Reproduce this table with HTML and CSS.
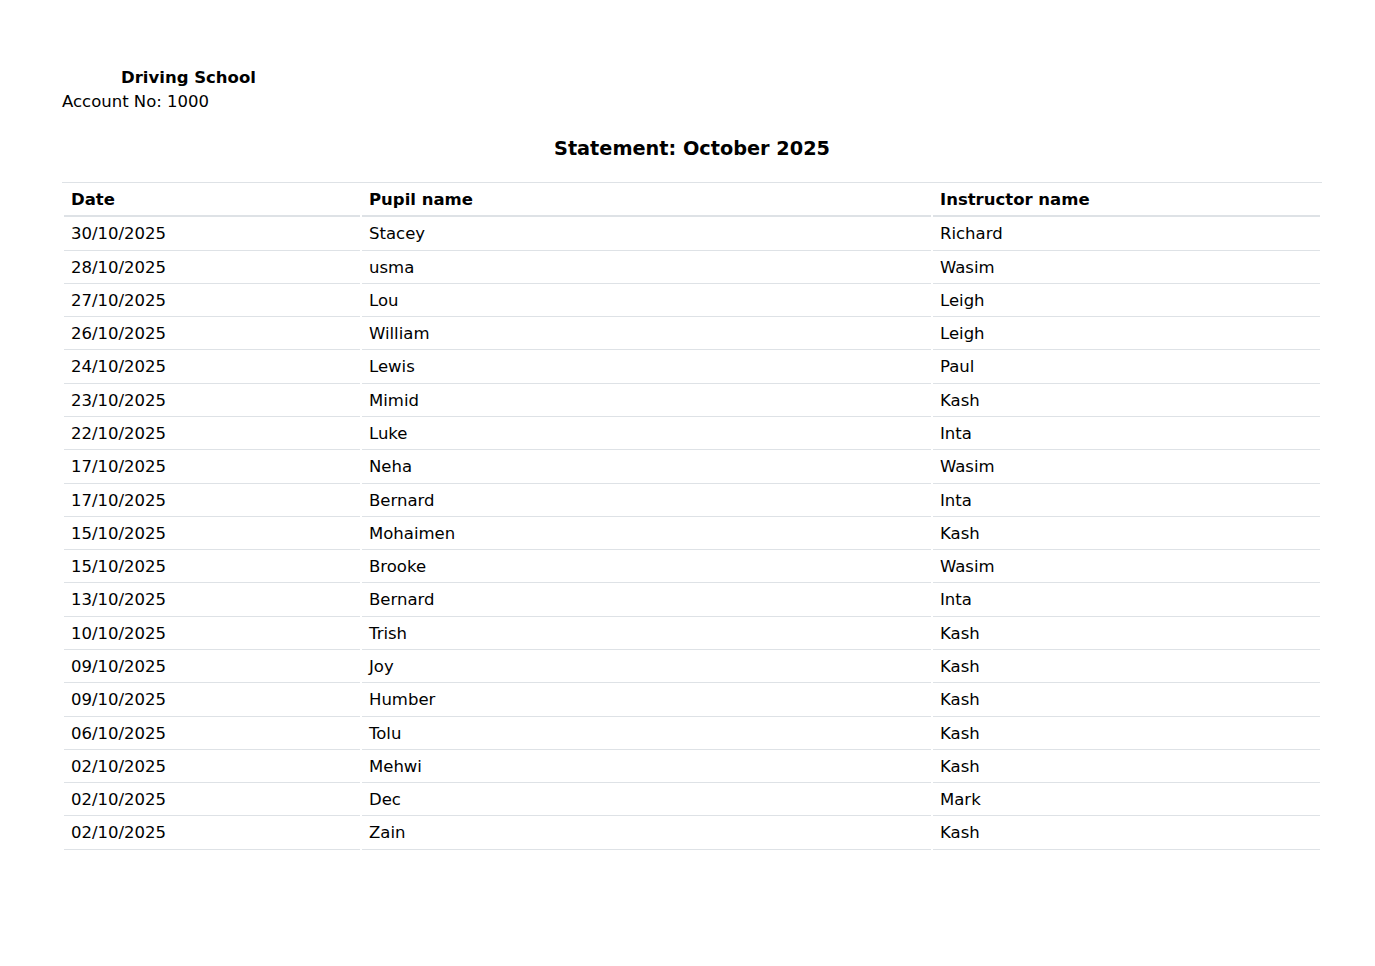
FILE: index.html
```html
<!DOCTYPE html>
<html lang="en">
<head>
<meta charset="utf-8">
<title>Statement: October 2025</title>
<link rel="stylesheet" href="styles.css">
</head>
<body>
<div class="page">
  <header class="head">
    <div class="school">Driving School</div>
    <div class="account">Account No: 1000</div>
  </header>
  <h1 class="title">Statement: October 2025</h1>
  <table class="statement">
    <thead>
      <tr><th class="c-date">Date</th><th class="c-pupil">Pupil name</th><th class="c-inst">Instructor name</th></tr>
    </thead>
    <tbody>
      <tr><td>30/10/2025</td><td>Stacey</td><td>Richard</td></tr>
      <tr><td>28/10/2025</td><td>usma</td><td>Wasim</td></tr>
      <tr><td>27/10/2025</td><td>Lou</td><td>Leigh</td></tr>
      <tr><td>26/10/2025</td><td>William</td><td>Leigh</td></tr>
      <tr><td>24/10/2025</td><td>Lewis</td><td>Paul</td></tr>
      <tr><td>23/10/2025</td><td>Mimid</td><td>Kash</td></tr>
      <tr><td>22/10/2025</td><td>Luke</td><td>Inta</td></tr>
      <tr><td>17/10/2025</td><td>Neha</td><td>Wasim</td></tr>
      <tr><td>17/10/2025</td><td>Bernard</td><td>Inta</td></tr>
      <tr><td>15/10/2025</td><td>Mohaimen</td><td>Kash</td></tr>
      <tr><td>15/10/2025</td><td>Brooke</td><td>Wasim</td></tr>
      <tr><td>13/10/2025</td><td>Bernard</td><td>Inta</td></tr>
      <tr><td>10/10/2025</td><td>Trish</td><td>Kash</td></tr>
      <tr><td>09/10/2025</td><td>Joy</td><td>Kash</td></tr>
      <tr><td>09/10/2025</td><td>Humber</td><td>Kash</td></tr>
      <tr><td>06/10/2025</td><td>Tolu</td><td>Kash</td></tr>
      <tr><td>02/10/2025</td><td>Mehwi</td><td>Kash</td></tr>
      <tr><td>02/10/2025</td><td>Dec</td><td>Mark</td></tr>
      <tr><td>02/10/2025</td><td>Zain</td><td>Kash</td></tr>
    </tbody>
  </table>
</div>
</body>
</html>
```

FILE: styles.css
```css
html, body {
  margin: 0;
  padding: 0;
  background: #ffffff;
}

body {
  font-family: "DejaVu Sans", "Liberation Sans", sans-serif;
  font-size: 16.5px;
  color: #000000;
}

.page {
  width: 1260px;
  padding: 66px 0 0 62px;
}

.head {
  line-height: 24px;
}

.school {
  font-weight: bold;
  padding-left: 59px;
}

.title {
  margin: 23px 0 21px 0;
  font-size: 19.3px;
  font-weight: bold;
  line-height: 24px;
  text-align: center;
}

.statement {
  width: 1260px;
  border-collapse: separate;
  border-spacing: 2px 0;
  border-top: 1px solid #dee2e6;
  table-layout: fixed;
}

.statement th,
.statement td {
  text-align: left;
  padding: 7px 7px 6px 7px;
  line-height: 19.28px;
  vertical-align: middle;
  white-space: nowrap;
}

.statement th {
  font-weight: bold;
  border-bottom: 2px solid #dee2e6;
}

.statement td {
  border-bottom: 1px solid #dee2e6;
}

.c-date { width: 282px; }
.c-pupil { width: 555px; }
.c-inst { width: 373px; }
```
